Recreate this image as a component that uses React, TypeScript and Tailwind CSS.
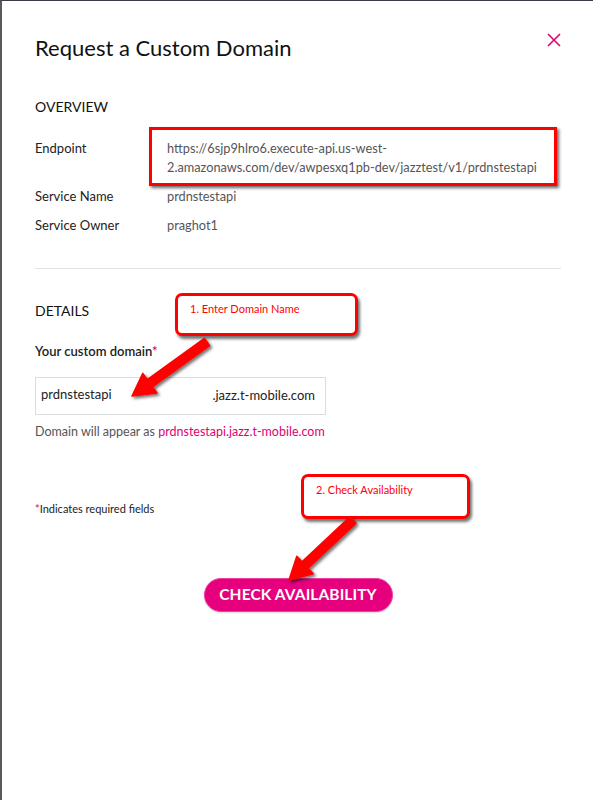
import React from "react";

const FONT = { fontFamily: "Lato, 'Open Sans', sans-serif" };

function Row({ label, children }: { label: string; children: React.ReactNode }) {
  return (
    <div className="flex text-[13px] leading-[19px]">
      <div className="w-[132px] shrink-0 text-[#222]">{label}</div>
      <div className="flex-1 text-[12.75px] text-[#555]">{children}</div>
    </div>
  );
}

function Callout({ className, text }: { className: string; text: string }) {
  return (
    <div
      className={
        "absolute rounded-[7px] border-[3px] border-[#ff0000] bg-white shadow-[2px_3px_3px_rgba(0,0,0,0.55)] " +
        className
      }
    >
      <span className="block pl-[12px] pt-[6px] text-[11px] leading-[14px] text-[#ff0000]">{text}</span>
    </div>
  );
}

// red annotation arrow from (x1,y1) to tip (x2,y2)
function arrowPoints(x1: number, y1: number, x2: number, y2: number) {
  const dx = x2 - x1;
  const dy = y2 - y1;
  const len = Math.hypot(dx, dy);
  const ux = dx / len;
  const uy = dy / len;
  const px = -uy;
  const py = ux;
  const head = 22;
  const hw = 12;
  const sw = 4.5;
  const bx = x2 - ux * head;
  const by = y2 - uy * head;
  const pts = [
    [x1 + px * sw, y1 + py * sw],
    [bx + px * sw, by + py * sw],
    [bx + px * hw, by + py * hw],
    [x2, y2],
    [bx - px * hw, by - py * hw],
    [bx - px * sw, by - py * sw],
    [x1 - px * sw, y1 - py * sw],
  ];
  return pts.map((p) => p[0].toFixed(1) + "," + p[1].toFixed(1)).join(" ");
}

function Arrows() {
  const a1 = arrowPoints(205, 341, 130, 395);
  const a2 = arrowPoints(351, 519, 287, 579);
  return (
    <svg className="pointer-events-none absolute left-0 top-0" width="593" height="800">
      <defs>
        <filter id="sh" x="-20%" y="-20%" width="140%" height="140%">
          <feDropShadow dx="2" dy="2" stdDeviation="1.5" floodColor="#000" floodOpacity="0.55" />
        </filter>
      </defs>
      <polygon points={a1} fill="#ff0000" stroke="#ff0000" strokeWidth="1.5" strokeLinejoin="round" filter="url(#sh)" />
      <polygon points={a2} fill="#ff0000" stroke="#ff0000" strokeWidth="1.5" strokeLinejoin="round" filter="url(#sh)" />
    </svg>
  );
}

export default function App() {
  return (
    <div
      className="relative h-[800px] w-[593px] overflow-hidden border-l-2 border-t border-l-[#5a5a5a] border-t-[#3c3c46] bg-white"
      style={FONT}
    >
      <div className="pl-[33px] pr-[32px] pt-[33px]">
        {/* Header */}
        <div className="flex items-start justify-between">
          <h1 className="text-[22px] leading-[28px] text-[#111]">Request a Custom Domain</h1>
          <button className="mt-[-1px] text-[#e20074]">
            <svg width="14" height="14" viewBox="0 0 14 14">
              <path d="M1 1 L13 13 M13 1 L1 13" stroke="#e20074" strokeWidth="1.6" />
            </svg>
          </button>
        </div>

        {/* Overview */}
        <h2 className="mt-[35px] text-[14px] leading-[20px] text-[#111]">OVERVIEW</h2>
        <div className="mt-[22px] flex flex-col gap-[10px]">
          <Row label="Endpoint">
            https://6sjp9hlro6.execute-api.us-west-
            <br />
            2.amazonaws.com/dev/awpesxq1pb-dev/jazztest/v1/prdnstestapi
          </Row>
          <Row label="Service Name">prdnstestapi</Row>
          <Row label="Service Owner">praghot1</Row>
        </div>

        <div className="mt-[33px] border-t border-[#e2e2e2]" />

        {/* Details */}
        <h2 className="mt-[32px] text-[14px] leading-[20px] text-[#111]">DETAILS</h2>
        <div className="mt-[21px] text-[13px] font-semibold leading-[19px] text-[#222]">
          Your custom domain<span className="text-[#e20074]">*</span>
        </div>
        <div className="mt-[16px] flex h-[38px] w-[291px] items-center justify-between border border-[#dcdcdc] pl-[5px] pr-[10px] text-[13px] text-[#222]">
          <span className="-mt-[3px]">prdnstestapi</span>
          <span>.jazz.t-mobile.com</span>
        </div>
        <div className="mt-[7px] text-[12.5px] leading-[19px] text-[#555]">
          Domain will appear as <span className="text-[#e20074]">prdnstestapi.jazz.t-mobile.com</span>
        </div>

        <div className="mt-[60px] text-[11px] leading-[16px] text-[#222]">
          <span className="text-[#e20074]">*</span>Indicates required fields
        </div>

        <div className="mt-[61px] flex justify-center">
          <button className="h-[34px] w-[189px] rounded-full border border-[#f0409f] bg-[#e6007e] text-[15.5px] font-bold tracking-[0.1px] text-white shadow-[0_1px_2px_rgba(0,0,0,0.15)]">
            CHECK AVAILABILITY
          </button>
        </div>
      </div>

      {/* Annotation overlays */}
      <div className="pointer-events-none absolute left-[147px] top-[126px] h-[59px] w-[408px] border-[3px] border-[#ff0000] shadow-[2px_2px_3px_rgba(0,0,0,0.6)]" />
      <Callout className="left-[173px] top-[292px] h-[43px] w-[183px]" text="1. Enter Domain Name" />
      <Callout className="left-[299px] top-[473px] h-[45px] w-[169px]" text="2. Check Availability" />
      <Arrows />
    </div>
  );
}
